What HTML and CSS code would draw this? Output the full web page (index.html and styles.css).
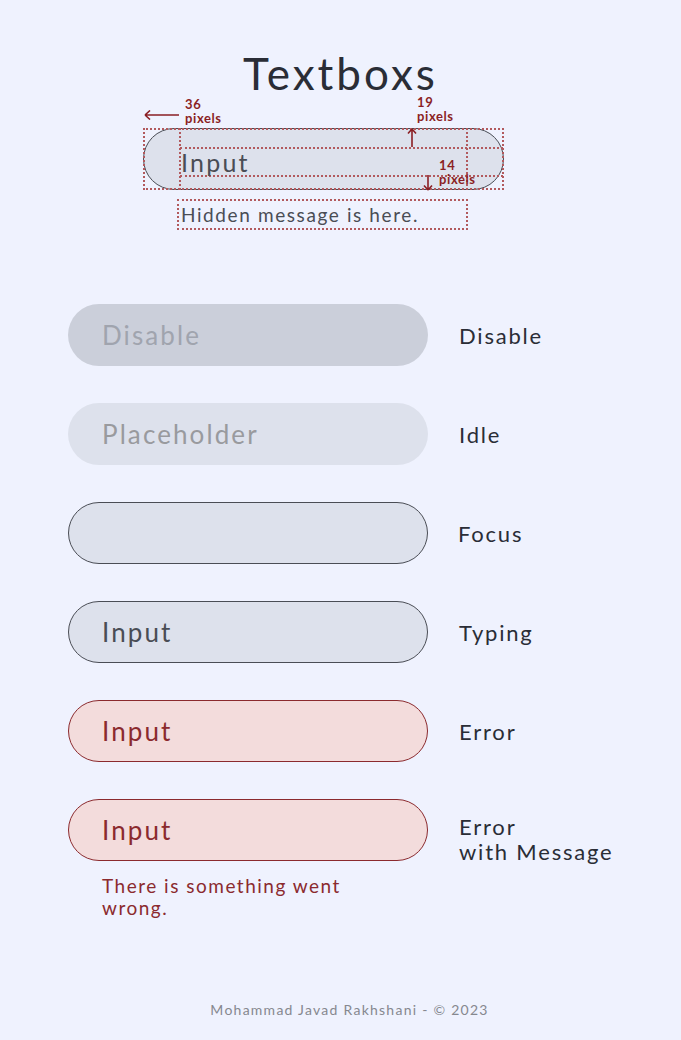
FILE: index.html
```html
<!DOCTYPE html>
<html>
<head>
<meta charset="utf-8">
<link rel="stylesheet" href="styles.css">
</head>
<body>
<main class="page">
  <h1 class="title">Textboxs</h1>

  <section class="anatomy">
    <div class="anno anno-36">
      <svg class="arrow-h" width="36" height="10" viewBox="0 0 36 10"><path d="M1 5H35M1 5L6 0.5M1 5L6 9.5" stroke="#8b1f24" stroke-width="1.6" fill="none"/></svg>
      <span class="anno-text">36<br>pixels</span>
    </div>
    <div class="anno anno-19"><span class="anno-text">19<br>pixels</span></div>
    <svg class="anno arrow-up" width="10" height="20" viewBox="0 0 10 20"><path d="M5 19V1M5 1L1 5.5M5 1L9 5.5" stroke="#8b1f24" stroke-width="1.6" fill="none"/></svg>
    <svg class="anno arrow-down" width="10" height="16" viewBox="0 0 10 16"><path d="M5 0V15M5 15L1 10.5M5 15L9 10.5" stroke="#8b1f24" stroke-width="1.6" fill="none"/></svg>
    <div class="anno anno-14"><span class="anno-text">14<br>pixels</span></div>

    <div class="demo-frame">
      <div class="demo-box">
        <div class="demo-inner"><span class="demo-input">Input</span></div>
      </div>
    </div>
    <div class="demo-msg">Hidden message is here.</div>
  </section>

  <section class="states">
    <div class="field disabled"><span class="field-text">Disable</span></div>
    <div class="state-label">Disable</div>

    <div class="field idle"><span class="field-text">Placeholder</span></div>
    <div class="state-label">Idle</div>

    <div class="field focus"></div>
    <div class="state-label shift">Focus</div>

    <div class="field typing"><span class="field-text">Input</span></div>
    <div class="state-label">Typing</div>

    <div class="field error"><span class="field-text">Input</span></div>
    <div class="state-label">Error</div>

    <div class="field-wrap">
      <div class="field error"><span class="field-text">Input</span></div>
      <div class="error-msg">There is something went wrong.</div>
    </div>
    <div class="state-label top">Error<br>with Message</div>
  </section>

  <footer class="footer">Mohammad Javad Rakhshani - © 2023</footer>
</main>
</body>
</html>
```

FILE: styles.css
```css
* { box-sizing: border-box; }
html, body { margin: 0; padding: 0; }
body {
  background: #eff2fe;
  font-family: "Lato", "Noto Sans", sans-serif;
  color: #2a2d36;
  width: 681px;
  height: 1040px;
}
.page {
  display: flex;
  flex-direction: column;
  height: 1040px;
}
.title {
  margin: 51px 0 0 0;
  text-align: center;
  font-weight: 400;
  font-size: 44px;
  line-height: 44px;
  letter-spacing: 3px;
  color: #2a2d36;
}

/* anatomy */
.anatomy {
  position: relative;
  margin: 33px 0 0 143px;
  width: 362px;
  height: 104px;
}
.demo-frame {
  position: relative;
  width: 361px;
  height: 62px;
}
.demo-frame::after {
  content: "";
  position: absolute;
  inset: 0;
  border: 2px dotted #b25a5e;
  pointer-events: none;
}
.demo-box {
  position: relative;
  height: 62px;
  border: 1px solid #4a4d55;
  border-radius: 31px;
  background: #dde1ec;
  padding: 18px 0 13px 36px;
}
.demo-box::before, .demo-box::after {
  content: "";
  position: absolute;
  top: -1px;
  bottom: -1px;
  border-left: 2px dotted #b25a5e;
}
.demo-box::before { left: 35px; }
.demo-box::after { right: 35px; }
.demo-inner {
  height: 30px;
  border-top: 2px dotted #b25a5e;
  border-bottom: 2px dotted #b25a5e;
  display: flex;
  align-items: center;
}
.demo-input {
  font-size: 25px;
  letter-spacing: 2.2px;
  color: #4a4d55;
  margin-left: 1px;
}
.demo-msg {
  margin: 9px 0 0 34px;
  width: 291px;
  height: 31px;
  border: 2px dotted #b25a5e;
  font-size: 19px;
  line-height: 27px;
  letter-spacing: 1.6px;
  padding-left: 2px;
  color: #4a4d55;
  white-space: nowrap;
}
.anno { position: absolute; z-index: 2; }
.anno-text {
  font-size: 13px;
  line-height: 14px;
  font-weight: 700;
  letter-spacing: 0.6px;
  color: #8b1f24;
  display: block;
}
.anno-36 { left: 1px; top: -31px; display: flex; align-items: flex-start; gap: 5px; }
.anno-36 .arrow-h { margin-top: 13px; }
.anno-19 { left: 274px; top: -33px; }
.anno-14 { left: 296px; top: 30px; }
.arrow-up { left: 264px; top: 0px; }
.arrow-down { left: 280px; top: 47px; }

/* states */
.states {
  margin: 72px 0 0 68px;
  display: grid;
  grid-template-columns: 360px auto;
  column-gap: 31px;
  row-gap: 37px;
  align-items: center;
}
.field {
  height: 62px;
  border-radius: 31px;
  background: #dde1ec;
  display: flex;
  align-items: center;
  padding-left: 33px;
  font-size: 26px;
  letter-spacing: 2.1px;
  border: 1px solid transparent;
}
.field.disabled { background: #cbcfda; color: #a0a4ae; }
.field.idle { color: #999a9e; }
.field.focus, .field.typing { border-color: #4a4d55; color: #4a4d55; }
.field.error { background: #f3dcdc; border-color: #8b2a2e; color: #8b2a2e; }
.field-text { line-height: 1; }
.state-label {
  font-size: 22px;
  line-height: 25px;
  letter-spacing: 1.8px;
  color: #2a2d36;
}
.state-label.shift { margin-left: -1px; }
.state-label.top { align-self: start; padding-top: 15px; }
.error-msg {
  margin: 14px 0 0 34px;
  width: 250px;
  font-size: 19px;
  line-height: 22px;
  letter-spacing: 1.5px;
  color: #8b2a2e;
}
.footer {
  margin-top: auto;
  margin-bottom: 22px;
  padding-left: 18px;
  text-align: center;
  font-size: 14px;
  letter-spacing: 1.25px;
  color: #86888f;
}
```
